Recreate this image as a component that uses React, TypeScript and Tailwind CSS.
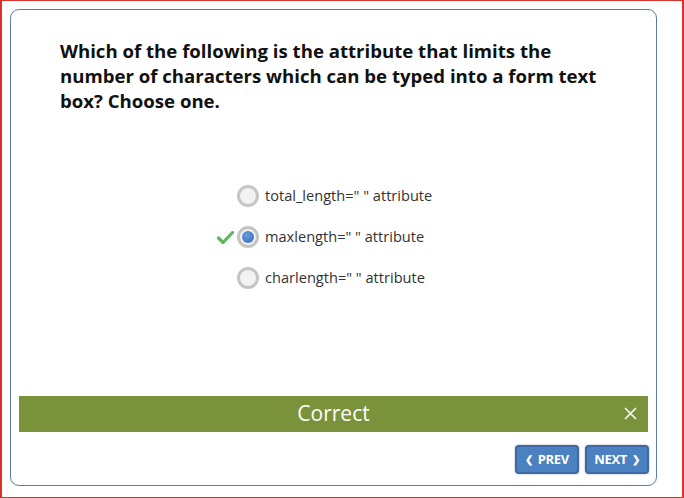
import React from 'react';

const options = [
  { id: 'a', label: 'total_length=" " attribute', selected: false },
  { id: 'b', label: 'maxlength=" " attribute', selected: true },
  { id: 'c', label: 'charlength=" " attribute', selected: false },
];

const Radio = ({ selected }: { selected: boolean }) => (
  <span className="flex h-[22px] w-[22px] items-center justify-center rounded-full border-[3px] border-[#c4c4c4] bg-[#f2f2f2]">
    {selected && (
      <span className="h-[12px] w-[12px] rounded-full bg-[radial-gradient(circle_at_40%_35%,#6a9de0,#2f65b8)]" />
    )}
  </span>
);

const Check = () => (
  <svg width="17" height="13" viewBox="0 0 17 13">
    <path d="M1.5 7 L6 11.5 L15.5 1.5" fill="none" stroke="#5cb85c" strokeWidth="3.2" strokeLinecap="round" strokeLinejoin="round" />
  </svg>
);

export default function App() {
  return (
    <div className="h-[498px] w-[684px] border-l-2 border-r-2 border-t border-b border-[#d9322a] bg-white pl-[8px] pr-[25px] pt-[8px] pb-[11px] font-['Open_Sans',sans-serif]">
      <div className="flex h-full flex-col rounded-[9px] border border-[#5b7d9e] bg-white">
        <h1 className="pl-[49px] pr-[40px] pt-[28px] text-[18.6px] font-bold leading-[25px] text-[#111]">
          Which of the following is the attribute that limits the number of characters which can be typed into a form text box? Choose one.
        </h1>

        <div className="mt-[72px] flex flex-col gap-[19px] pl-[206px]">
          {options.map((o) => (
            <div key={o.id} className="flex h-[22px] items-center">
              <span className="flex w-[20px] justify-start">{o.selected && <Check />}</span>
              <Radio selected={o.selected} />
              <span className="ml-[6px] text-[14.6px] text-[#333]">{o.label}</span>
            </div>
          ))}
        </div>

        <div className="flex-1" />

        <div className="relative mx-[8px] flex h-[36px] items-center justify-center bg-[#7a933b]">
          <span className="text-[21px] text-white">Correct</span>
          <button className="absolute right-[11px] top-[11px] text-white">
            <svg width="13" height="13" viewBox="0 0 13 13">
              <path d="M1 1 L12 12 M12 1 L1 12" stroke="white" strokeWidth="1.6" />
            </svg>
          </button>
        </div>

        <div className="flex justify-end gap-[6px] px-[7px] pt-[13px] pb-[11px]">
          <button className="flex h-[29px] w-[64px] items-center justify-center gap-[5px] rounded-[4px] border-2 border-[#3b6aa6] bg-[#4b80c1] text-[13px] font-bold tracking-[-0.3px] text-white shadow-[0_0_2px_rgba(0,0,0,0.4)]">
            <span className="text-[10px]">❮</span>PREV
          </button>
          <button className="flex h-[29px] w-[64px] items-center justify-center gap-[5px] rounded-[4px] border-2 border-[#3b6aa6] bg-[#4b80c1] text-[13px] font-bold tracking-[-0.3px] text-white shadow-[0_0_2px_rgba(0,0,0,0.4)]">
            NEXT<span className="text-[10px]">❯</span>
          </button>
        </div>
      </div>
    </div>
  );
}
